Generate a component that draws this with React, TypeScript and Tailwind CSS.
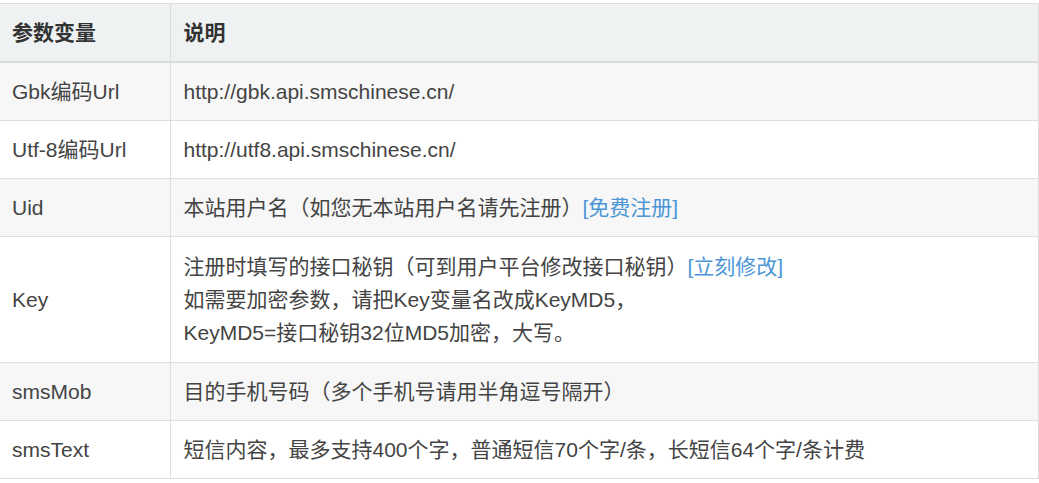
import React from "react";

const link = "text-[#4b96d6]";

type Row = { k: string; v: React.ReactNode; tall?: boolean };

const rows: Row[] = [
  { k: "Gbk编码Url", v: "http://gbk.api.smschinese.cn/" },
  { k: "Utf-8编码Url", v: "http://utf8.api.smschinese.cn/" },
  {
    k: "Uid",
    v: (
      <>
        本站用户名（如您无本站用户名请先注册）<span className={link}>[免费注册]</span>
      </>
    ),
  },
  {
    k: "Key",
    tall: true,
    v: (
      <>
        <div>
          注册时填写的接口秘钥（可到用户平台修改接口秘钥）<span className={link}>[立刻修改]</span>
        </div>
        <div>如需要加密参数，请把Key变量名改成KeyMD5，</div>
        <div>KeyMD5=接口秘钥32位MD5加密，大写。</div>
      </>
    ),
  },
  { k: "smsMob", v: "目的手机号码（多个手机号请用半角逗号隔开）" },
  { k: "smsText", v: "短信内容，最多支持400个字，普通短信70个字/条，长短信64个字/条计费" },
];

export default function App() {
  return (
    <div
      className="w-[1039px] h-[483px] bg-white pt-[3px] overflow-hidden"
      style={{ fontFamily: '"Liberation Sans", Arial, "Noto Sans CJK SC", sans-serif' }}
    >
      <table className="w-[1039px] table-fixed border-collapse text-[21px] leading-[33px] text-[#444]">
        <colgroup>
          <col className="w-[170px]" />
          <col />
        </colgroup>
        <thead>
          <tr className="bg-[#eff2f3]">
            <th className="border-t border-r border-[#dddddd] border-b-2 px-[12px] py-[12px] text-left font-bold text-[#333]">
              参数变量
            </th>
            <th className="border-t border-r border-[#dddddd] border-b-2 px-[13px] py-[12px] text-left font-bold text-[#333]">
              说明
            </th>
          </tr>
        </thead>
        <tbody>
          {rows.map((r, i) => (
            <tr key={r.k} className={i % 2 === 0 ? "bg-[#f7f7f7]" : "bg-white"}>
              <td
                className={`border-r border-b border-[#dddddd] px-[12px] align-middle ${
                  r.tall ? "py-[13px]" : "py-[12px]"
                }`}
              >
                {r.k}
              </td>
              <td
                className={`border-r border-b border-[#dddddd] px-[13px] align-middle ${
                  r.tall ? "py-[13px]" : "py-[12px]"
                }`}
              >
                {r.v}
              </td>
            </tr>
          ))}
        </tbody>
      </table>
    </div>
  );
}
